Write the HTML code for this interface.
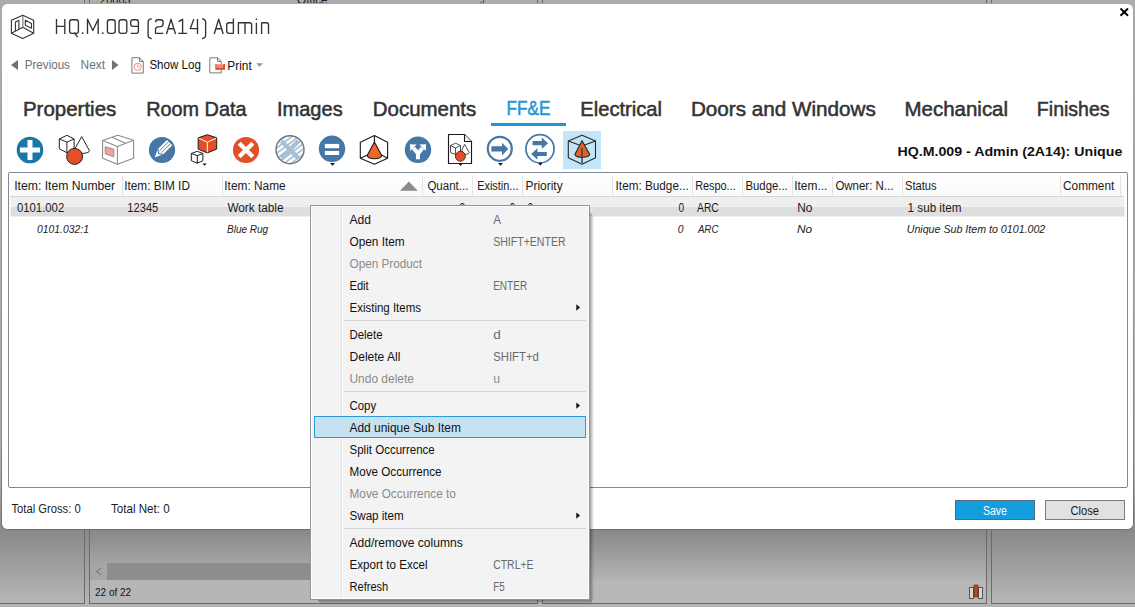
<!DOCTYPE html>
<html><head><meta charset="utf-8">
<style>
*{margin:0;padding:0}
html,body{width:1135px;height:607px;overflow:hidden;background:#a9a9a9}
svg{position:absolute;left:0;top:0;display:block}
text{font-family:"Liberation Sans",sans-serif;white-space:pre}
</style></head><body>
<svg width="1135" height="607" viewBox="0 0 1135 607">
<defs>
  <linearGradient id="bgEdge" x1="0" y1="0" x2="0" y2="1">
    <stop offset="0" stop-color="#acacac"/><stop offset="1" stop-color="#8c8c8c"/>
  </linearGradient>
  <linearGradient id="dlgStroke" x1="0" y1="0" x2="0" y2="1">
    <stop offset="0" stop-color="#a8a8a8"/><stop offset="0.8" stop-color="#8a8a8a"/><stop offset="1" stop-color="#707070"/>
  </linearGradient>
  <linearGradient id="bgL" x1="0" y1="0" x2="0" y2="1">
    <stop offset="0" stop-color="#888888"/><stop offset="1" stop-color="#b9b9b9"/>
  </linearGradient>
  <linearGradient id="bgR" x1="0" y1="0" x2="0" y2="1">
    <stop offset="0" stop-color="#878787"/><stop offset="1" stop-color="#b3b3b3"/>
  </linearGradient>
  <linearGradient id="hdr" x1="0" y1="0" x2="0" y2="1">
    <stop offset="0" stop-color="#ffffff"/><stop offset="1" stop-color="#f8f9fa"/>
  </linearGradient>
  <linearGradient id="row1" x1="0" y1="0" x2="0" y2="1">
    <stop offset="0" stop-color="#eeeeee"/><stop offset="1" stop-color="#dcdcdc"/>
  </linearGradient>
  <pattern id="hatch" patternUnits="userSpaceOnUse" width="4.2" height="4.2" patternTransform="rotate(-37)">
    <rect x="0" y="0" width="4.2" height="4.2" fill="#a6c0d8"/>
    <rect x="0" y="0" width="4.2" height="2.5" fill="#ffffff"/>
  </pattern>
</defs>
<!-- background app -->
<rect x="0" y="0" width="1135" height="607" fill="#acacac"/>
<rect x="0" y="470" width="1135" height="60" fill="url(#bgEdge)"/>
<rect x="0" y="529" width="1135" height="78" fill="url(#bgL)"/>
<rect x="90" y="529" width="447" height="51" fill="url(#bgR)"/>
<rect x="542" y="529" width="444" height="51" fill="url(#bgR)"/>
<rect x="90" y="580" width="447" height="23" fill="#b6b6b6"/>
<rect x="542" y="580" width="444" height="23" fill="#b8b8b8"/>
<rect x="90" y="563" width="447" height="17" fill="#a6a6a6"/>
<rect x="107" y="563" width="430" height="17" fill="#8d8d8d"/>
<path d="M101 568 L96.5 571.5 L101 575" stroke="#6a6a6a" stroke-width="1" fill="none"/>
<rect x="0" y="603" width="85" height="1" fill="#6a6a6a"/><rect x="89" y="603" width="449" height="1" fill="#6a6a6a"/><rect x="542" y="603" width="445" height="1" fill="#6a6a6a"/><rect x="991" y="603" width="144" height="1" fill="#6a6a6a"/>
<rect x="0" y="604" width="1135" height="3" fill="#b4b4b4"/>
<rect x="84" y="0" width="1" height="604" fill="#6a6a6a"/>
<rect x="89" y="0" width="1" height="604" fill="#6a6a6a"/>
<rect x="537" y="0" width="1" height="604" fill="#6a6a6a"/>
<rect x="542" y="0" width="1" height="604" fill="#6a6a6a"/>
<rect x="986" y="0" width="1" height="604" fill="#6a6a6a"/>
<rect x="991" y="0" width="1" height="604" fill="#6a6a6a"/>
<rect x="969.5" y="587.5" width="4" height="11" fill="#d6d6d6" stroke="#555" stroke-width="1"/>
<rect x="978.5" y="587.5" width="4" height="11" fill="#d6d6d6" stroke="#555" stroke-width="1"/>
<rect x="974" y="585" width="4" height="12" fill="#b9432a" stroke="#5a2a20" stroke-width="0.6"/>
<text x="95.00" y="596.00" font-size="11" textLength="36.11" lengthAdjust="spacingAndGlyphs" fill="#111" >22 of 22</text>
<text x="100.00" y="3.60" font-size="12" textLength="30.70" lengthAdjust="spacingAndGlyphs" fill="#222" >20003</text>
<text x="297.00" y="3.60" font-size="12" textLength="30.68" lengthAdjust="spacingAndGlyphs" fill="#222" >Office</text>
<text x="480.00" y="3.60" font-size="12" textLength="4.29" lengthAdjust="spacingAndGlyphs" fill="#222" >5</text>
<!-- dialog -->
<rect x="1.5" y="3.5" width="1132" height="526" rx="6" fill="#ffffff" stroke="url(#dlgStroke)" stroke-width="1"/>
<!-- logo -->
<g fill="none" stroke="#333" stroke-width="1.1" stroke-linejoin="round">
  <path d="M22.8 15.2 L11.4 20.2 L11.4 33.3 L22.8 38.4 L33.7 33.3 L33.7 20.2 Z"/>
  <path d="M11.4 33.3 L22.8 27.3 L33.7 33.3"/>
  <path d="M15.4 31 L15.4 22.1 L18.9 20.4 L18.9 29"/>
  <path d="M25.3 20.2 L31.5 23.4 L31.5 28.3 L25.3 25.3 Z"/>
</g>
<rect x="22" y="16" width="1.6" height="11.3" fill="#999"/>
<!-- title glyphs -->
<g fill="none" stroke="#333" stroke-width="1.35" stroke-linecap="butt" stroke-linejoin="round">
  <path d="M56.5 19 V34 M64.8 19 V34 M56.5 26.3 H64.8"/>
  <rect x="69.6" y="19.7" width="8.8" height="13.6" rx="2.3"/>
  <path d="M74.2 32.5 L77.6 37.2"/>
  <path d="M87.5 34 V19.2 L92.85 30.5 L98.2 19.2 V34"/>
  <rect x="107.4" y="19.7" width="7.8" height="13.6" rx="2.3"/>
  <rect x="119" y="19.7" width="7.8" height="13.6" rx="2.3"/>
  <path d="M138.4 26.4 H133 Q130.7 26.4 130.7 24.1 V22 Q130.7 19.7 133 19.7 H136.1 Q138.4 19.7 138.4 22 V31 Q138.4 33.3 136.1 33.3 H130.7"/>
  <path d="M151.8 18.9 Q148.1 19.2 148.1 22 V35.6 Q148.1 38.3 151.8 38.6"/>
  <path d="M155.5 22.2 Q155.5 19.7 158 19.7 H160.7 Q163.1 19.7 163.1 22.2 V24.1 Q163.1 26.4 160.7 26.6 L158 26.8 Q155.5 27 155.5 29.4 V33.3 H163.3"/>
  <path d="M166.5 34 L171 19.2 L175.5 34 M168.3 28.7 H173.7"/>
  <path d="M178.6 21.6 L182.6 19.3 V33.3 M178.3 33.3 H187.1"/>
  <path d="M197.5 19 V34 M193.8 19.3 L190.3 28.6 H198.4"/>
  <path d="M202 18.9 Q205.6 19.2 205.6 22 V35.6 Q205.6 38.3 202 38.6"/>
  <path d="M214.2 34 L218.7 19.2 L223.2 34 M216 28.7 H221.4"/>
  <path d="M233.4 18.6 V33.3 H229 Q226.7 33.3 226.7 31 V25 Q226.7 22.7 229 22.7 H233.4"/>
  <path d="M238.4 34 V22.7 H249.6 Q251.6 22.7 251.6 24.8 V34 M245 22.7 V34"/>
  <path d="M256.4 22.7 V34 M256.4 18.6 V20"/>
  <path d="M261.6 34 V22.7 H266.3 Q268.5 22.7 268.5 24.9 V34"/>
</g>
<rect x="81.8" y="32.4" width="1.6" height="1.6" fill="#333"/><rect x="101.9" y="32.4" width="1.6" height="1.6" fill="#333"/>
<!-- close X -->
<path d="M1120.5 8.5 L1128 15.8 M1128 8.5 L1120.5 15.8" stroke="#000" stroke-width="1.9"/>
<!-- nav arrows -->
<path d="M11 65 L18 60 L18 70 Z" fill="#707070"/>
<path d="M118.5 65 L112 60 L112 70 Z" fill="#707070"/>
<!-- show log icon -->
<path d="M131.9 57.7 L139.5 57.7 L143.3 61.5 L143.3 73.1 L131.9 73.1 Z" fill="#fff" stroke="#7a7a7a" stroke-width="1"/>
<path d="M139.5 57.7 L139.5 61.5 L143.3 61.5" fill="none" stroke="#7a7a7a" stroke-width="1"/>
<circle cx="137.7" cy="66.8" r="3.6" fill="none" stroke="#e8806a" stroke-width="0.9"/>
<path d="M137.7 64.6 L137.7 66.9 L139.6 66.9" fill="none" stroke="#e8806a" stroke-width="0.9"/>
<!-- print icon -->
<path d="M209.8 57.8 L217.5 57.8 L221.2 61.4 L221.2 72.9 L209.8 72.9 Z" fill="#fff" stroke="#7a7a7a" stroke-width="1"/>
<path d="M217.5 57.8 L217.5 61.4 L221.2 61.4" fill="none" stroke="#7a7a7a" stroke-width="1"/>
<rect x="215.3" y="64" width="9.7" height="5.8" fill="#e24a2a"/>
<text x="216.6" y="68.2" font-size="4.6" font-weight="bold" fill="#fbd0c4" textLength="7" lengthAdjust="spacingAndGlyphs">PDF</text>
<path d="M256.1 63.2 L263 63.2 L259.55 67.1 Z" fill="#9a9a9a"/>
<!-- tab underline -->
<rect x="491" y="123" width="75" height="3" fill="#1c97d6"/>
<!-- toolbar icons -->
<circle cx="30" cy="150" r="13.3" fill="#1a78a8"/>
<path d="M27.5 140 h5 v7.5 h7.5 v5 h-7.5 v7.5 h-5 v-7.5 h-7.5 v-5 h7.5 Z" fill="#fff"/>

<g fill="#fff" stroke="#222" stroke-width="1" stroke-linejoin="round">
  <path d="M66.9 135.3 L59.3 138.9 L59.3 148.8 L66.9 152.7 L74.1 148.8 L74.1 138.9 Z"/>
  <path d="M59.3 138.9 L66.9 142.2 L74.1 138.9 M66.9 142.2 L66.9 152.7" fill="none"/>
  <path d="M81.7 136.6 L75.4 147.8 Q76 153.4 82.7 153.4 Q89.8 153 89.3 150.4 Z"/>
  <circle cx="74.6" cy="156.4" r="8" fill="#e34f26"/>
</g>

<g fill="#fff" stroke="#8c8c8c" stroke-width="1.1" stroke-linejoin="round">
  <path d="M117.8 135.3 L102.6 140.5 L102.6 158.3 L117.4 164.3 L133.6 158.3 L133.6 140.2 Z"/>
  <path d="M102.6 140.5 L117.4 146.5 L133.6 140.2 M117.4 146.5 L117.4 164.3 M112.2 137.2 L126 143.5" fill="none"/>
  <path d="M105.2 146.8 L113.8 149.4 L113.8 156.7 L105.2 153.7 Z" fill="#f4a292" stroke="#999"/>
</g>

<circle cx="162" cy="150" r="13.1" fill="#4777a6"/>
<g transform="translate(162.4 149.8) rotate(45)">
  <path d="M-3.8 -10.2 h7.6 v12.8 l-3.8 8.4 l-3.8 -8.4 Z" fill="#fff"/>
  <path d="M-1.3 -10.2 v12.8 M1.3 -10.2 v12.8" stroke="#4777a6" stroke-width="0.9"/>
  <path d="M-4 2.6 L0 5.2 L4 2.6" stroke="#4777a6" stroke-width="1" fill="none"/>
</g>

<g stroke="#1a1a1a" stroke-width="1" stroke-linejoin="round">
  <path d="M207.3 134.7 L198.2 137.8 L198.2 149.1 L207.3 152.9 L216.7 149.1 L216.7 137.8 Z" fill="#e34f26"/>
  <path d="M198.8 138.3 L207.3 142.2 L216.1 138.3 M207.3 142.2 L207.3 152.3" stroke="#fff" fill="none"/>
  <path d="M197.3 151.3 L191.3 153.5 L191.3 160.7 L197.3 163.2 L202.9 160.7 L202.9 153.5 Z" fill="#fff"/>
  <path d="M191.3 153.5 L197.3 155.7 L202.9 153.5 M197.3 155.7 L197.3 163.2" fill="none"/>
</g>
<path d="M202.4 163.5 L206.7 163.5 L204.6 165.8 Z" fill="#111"/>

<circle cx="246" cy="150" r="13.1" fill="#e34f26"/>
<path d="M239.2 143.2 L252.8 156.8 M252.8 143.2 L239.2 156.8" stroke="#fff" stroke-width="4.3"/>

<circle cx="290" cy="149.7" r="14" fill="url(#hatch)" stroke="#747474" stroke-width="1.4"/>
<path d="M281.5 141 L298.5 158.4 M298.5 141 L281.5 158.4" stroke="#a6c0d8" stroke-width="4.6"/>

<circle cx="332" cy="148.8" r="13.2" fill="#4777a6"/>
<rect x="324.9" y="143.9" width="14.2" height="4.3" fill="#fff"/>
<rect x="324.9" y="151" width="14.2" height="4" fill="#fff"/>
<path d="M330 163.1 L335 163.1 L332.5 165.8 Z" fill="#111"/>

<g fill="none" stroke="#1a1a1a" stroke-width="1.1" stroke-linejoin="round">
  <path d="M374.4 135.6 L360.3 142.2 L360.3 158.3 L374.4 164.3 L387.6 158.3 L387.6 142.2 Z"/>
  <path d="M374.4 135.6 L374.4 142 M360.3 158.3 L367.5 155 M387.6 158.3 L381.5 155"/>
  <path d="M374.4 141.9 L367.2 155.4 Q368 158.7 374.4 158.7 Q381 158.7 381.7 155.4 Z" fill="#ee6628"/>
</g>

<circle cx="418" cy="149.8" r="13.2" fill="#4777a6"/>
<path d="M418 159.3 L418 153.5 L413.5 148 M418 153.5 L422.5 148" stroke="#fff" stroke-width="4" fill="none" stroke-linejoin="miter"/>
<path d="M409.9 144.2 L416.6 144.6 L410.3 150.9 Z" fill="#fff"/>
<path d="M426.1 144.2 L419.4 144.6 L425.7 150.9 Z" fill="#fff"/>
<path d="M448.5 134.5 L464.5 134.5 L471.5 141.5 L471.5 163.5 L448.5 163.5 Z" fill="#fff" stroke="#1a1a1a" stroke-width="1.15" stroke-linejoin="round"/>
<path d="M464.5 134.5 L464.5 141.5 L471.5 141.5" fill="#f0f0f0" stroke="#1a1a1a" stroke-width="1.1"/>
<g fill="#fff" stroke="#3a3a3a" stroke-width="0.9" stroke-linejoin="round">
  <path d="M455.5 143.2 L450.5 145.5 L450.5 152.5 L455.5 154.5 L460.5 152.5 L460.5 145.5 Z"/>
  <path d="M450.5 145.5 L455.5 148 L460.5 145.5 M455.5 148 L455.5 154.5" fill="none"/>
  <path d="M464.7 144.4 L461.8 150 Q462.5 154.4 465 154.4 Q469.6 154 469.4 152.9 Z"/>
</g>
<circle cx="460.4" cy="156.3" r="5" fill="#e34f26" stroke="#222" stroke-width="0.8"/>
<path d="M458.7 163.8 L462.5 163.8 L460.6 166 Z" fill="#111"/>

<circle cx="499.8" cy="148.8" r="12" fill="none" stroke="#4777a6" stroke-width="2.2"/>
<path d="M491.4 146.3 L502 146.3 L502 142.8 L508.3 149 L502 155.4 L502 151.6 L491.4 151.6 Z" fill="#4777a6"/>
<path d="M498 162.9 L503 162.9 L500.5 165.7 Z" fill="#111"/>

<circle cx="540" cy="148.8" r="14.1" fill="none" stroke="#4777a6" stroke-width="1.7"/>
<path d="M532.6 141 L541.8 141 L541.8 137.5 L548 143.2 L541.8 148.9 L541.8 145.2 L532.6 145.2 Z" fill="#4777a6"/>
<path d="M546.8 151.9 L537.4 151.9 L537.4 148.3 L531.2 154 L537.4 159.7 L537.4 156.1 L546.8 156.1 Z" fill="#4777a6"/>
<path d="M538.3 162.9 L542.4 162.9 L540.3 165.8 Z" fill="#111"/>

<rect x="563" y="131" width="38" height="38" fill="#c3e5f9"/>
<g fill="none" stroke="#2a2a2a" stroke-width="1.1" stroke-linejoin="round">
  <path d="M582 135.2 L568.3 141 L568.3 157.7 L582 164.2 L595.5 157.7 L595.5 141 Z"/>
  <path d="M568.3 141 L582 146.1 L595.5 141"/>
</g>
<rect x="581" y="157" width="2" height="7" fill="#5a6a78"/>
<path d="M582 140.7 L574.9 154.4 Q575.5 157.3 582 157.3 Q589 157.3 589.7 154.4 Z" fill="#e0622a" stroke="#2a2a2a" stroke-width="1.1"/>
<rect x="581" y="148" width="2" height="9" fill="#7a4030"/>

<!-- grid -->
<rect x="8.5" y="172.5" width="1119" height="315" fill="#fff" stroke="#7f8a96" stroke-width="1" rx="1.5"/>
<rect x="10" y="174" width="1114" height="22" fill="url(#hdr)"/>
<rect x="10" y="196" width="1114" height="1" fill="#d6d6d6"/>
<g fill="#e3e3e3">
  <rect x="122" y="175" width="1" height="21"/><rect x="222" y="175" width="1" height="21"/>
  <rect x="422" y="175" width="1" height="21"/><rect x="472" y="175" width="1" height="21"/>
  <rect x="522" y="175" width="1" height="21"/><rect x="612" y="175" width="1" height="21"/>
  <rect x="692" y="175" width="1" height="21"/><rect x="742" y="175" width="1" height="21"/>
  <rect x="792" y="175" width="1" height="21"/><rect x="832" y="175" width="1" height="21"/>
  <rect x="902" y="175" width="1" height="21"/><rect x="1060" y="175" width="1" height="21"/>
  <rect x="1120" y="175" width="1" height="21"/>
</g>
<path d="M400 190.7 L417.7 190.7 L408.85 181.6 Z" fill="#8a8a8a"/>
<rect x="10.5" y="197" width="1114" height="10" fill="#efefef"/><rect x="10.5" y="207" width="1114" height="9.5" fill="#dedede"/>

<!-- buttons -->
<rect x="955.5" y="500.5" width="79" height="19" fill="#139ee0" stroke="#5a6a78" stroke-width="1"/>
<rect x="1045.5" y="500.5" width="79" height="19" fill="#e1e1e1" stroke="#7a7a7a" stroke-width="1"/>

<text x="24.77" y="69.10" font-size="12.5" textLength="45.16" lengthAdjust="spacingAndGlyphs" fill="#707070" >Previous</text>
<text x="80.55" y="69.10" font-size="12.5" textLength="24.45" lengthAdjust="spacingAndGlyphs" fill="#707070" >Next</text>
<text x="149.40" y="69.20" font-size="12.5" textLength="51.56" lengthAdjust="spacingAndGlyphs" fill="#111" >Show Log</text>
<text x="227.35" y="69.60" font-size="12.5" textLength="24.35" lengthAdjust="spacingAndGlyphs" fill="#111" >Print</text>
<text x="22.94" y="116.00" font-size="19.3" textLength="93.34" lengthAdjust="spacingAndGlyphs" fill="#333" stroke="#333" stroke-width="0.5">Properties</text>
<text x="146.17" y="116.00" font-size="19.3" textLength="100.34" lengthAdjust="spacingAndGlyphs" fill="#333" stroke="#333" stroke-width="0.5">Room Data</text>
<text x="276.96" y="116.00" font-size="19.3" textLength="65.70" lengthAdjust="spacingAndGlyphs" fill="#333" stroke="#333" stroke-width="0.5">Images</text>
<text x="372.84" y="116.00" font-size="19.3" textLength="103.44" lengthAdjust="spacingAndGlyphs" fill="#333" stroke="#333" stroke-width="0.5">Documents</text>
<text x="580.36" y="116.00" font-size="19.3" textLength="81.58" lengthAdjust="spacingAndGlyphs" fill="#333" stroke="#333" stroke-width="0.5">Electrical</text>
<text x="690.93" y="116.00" font-size="19.3" textLength="184.96" lengthAdjust="spacingAndGlyphs" fill="#333" stroke="#333" stroke-width="0.5">Doors and Windows</text>
<text x="904.54" y="116.00" font-size="19.3" textLength="103.52" lengthAdjust="spacingAndGlyphs" fill="#333" stroke="#333" stroke-width="0.5">Mechanical</text>
<text x="1036.89" y="116.00" font-size="19.3" textLength="72.66" lengthAdjust="spacingAndGlyphs" fill="#333" stroke="#333" stroke-width="0.5">Finishes</text>
<text x="506.51" y="114.70" font-size="19.3" textLength="43.97" lengthAdjust="spacingAndGlyphs" fill="#1c97d6" stroke="#1c97d6" stroke-width="0.5">FF&amp;E</text>
<text x="897.50" y="155.90" font-size="13.7" textLength="224.80" lengthAdjust="spacingAndGlyphs" fill="#111" font-weight="bold" >HQ.M.009 - Admin (2A14): Unique</text>
<text x="14.18" y="189.80" font-size="12" textLength="101.01" lengthAdjust="spacingAndGlyphs" fill="#1a1a1a" >Item: Item Number</text>
<text x="124.21" y="189.80" font-size="12" textLength="65.76" lengthAdjust="spacingAndGlyphs" fill="#1a1a1a" >Item: BIM ID</text>
<text x="224.31" y="189.80" font-size="12" textLength="61.37" lengthAdjust="spacingAndGlyphs" fill="#1a1a1a" >Item: Name</text>
<text x="427.40" y="189.80" font-size="12" textLength="41.02" lengthAdjust="spacingAndGlyphs" fill="#1a1a1a" >Quant...</text>
<text x="477.20" y="189.80" font-size="12" textLength="41.30" lengthAdjust="spacingAndGlyphs" fill="#1a1a1a" >Existin...</text>
<text x="525.60" y="189.80" font-size="12" textLength="37.00" lengthAdjust="spacingAndGlyphs" fill="#1a1a1a" >Priority</text>
<text x="615.62" y="189.80" font-size="12" textLength="73.11" lengthAdjust="spacingAndGlyphs" fill="#1a1a1a" >Item: Budge...</text>
<text x="695.20" y="189.80" font-size="12" textLength="40.50" lengthAdjust="spacingAndGlyphs" fill="#1a1a1a" >Respo...</text>
<text x="745.50" y="189.80" font-size="12" textLength="42.22" lengthAdjust="spacingAndGlyphs" fill="#1a1a1a" >Budge...</text>
<text x="794.21" y="189.80" font-size="12" textLength="33.13" lengthAdjust="spacingAndGlyphs" fill="#1a1a1a" >Item...</text>
<text x="835.40" y="189.80" font-size="12" textLength="58.02" lengthAdjust="spacingAndGlyphs" fill="#1a1a1a" >Owner: N...</text>
<text x="905.00" y="189.80" font-size="12" textLength="31.60" lengthAdjust="spacingAndGlyphs" fill="#1a1a1a" >Status</text>
<text x="1063.00" y="189.80" font-size="12" textLength="51.34" lengthAdjust="spacingAndGlyphs" fill="#1a1a1a" >Comment</text>
<text x="17.00" y="211.80" font-size="12" textLength="47.19" lengthAdjust="spacingAndGlyphs" fill="#1a1a1a" >0101.002</text>
<text x="127.30" y="211.80" font-size="12" textLength="31.00" lengthAdjust="spacingAndGlyphs" fill="#1a1a1a" >12345</text>
<text x="227.40" y="211.80" font-size="12" textLength="56.08" lengthAdjust="spacingAndGlyphs" fill="#1a1a1a" >Work table</text>
<text x="678.50" y="211.80" font-size="12" textLength="5.63" lengthAdjust="spacingAndGlyphs" fill="#1a1a1a" >0</text>
<text x="697.00" y="211.80" font-size="12" textLength="21.81" lengthAdjust="spacingAndGlyphs" fill="#1a1a1a" >ARC</text>
<text x="797.30" y="211.80" font-size="12" textLength="15.18" lengthAdjust="spacingAndGlyphs" fill="#1a1a1a" >No</text>
<text x="907.60" y="211.80" font-size="12" textLength="53.80" lengthAdjust="spacingAndGlyphs" fill="#1a1a1a" >1 sub item</text>
<text x="459.00" y="211.80" font-size="12" textLength="6.20" lengthAdjust="spacingAndGlyphs" fill="#1a1a1a" >6</text>
<text x="509.50" y="211.80" font-size="12" textLength="5.72" lengthAdjust="spacingAndGlyphs" fill="#1a1a1a" >0</text>
<text x="527.50" y="211.80" font-size="12" textLength="5.72" lengthAdjust="spacingAndGlyphs" fill="#1a1a1a" >0</text>
<text x="37.00" y="232.70" font-size="11" textLength="51.91" lengthAdjust="spacingAndGlyphs" fill="#222" font-style="italic" >0101.032:1</text>
<text x="227.00" y="232.70" font-size="11" textLength="41.20" lengthAdjust="spacingAndGlyphs" fill="#222" font-style="italic" >Blue Rug</text>
<text x="677.80" y="232.70" font-size="11" textLength="5.77" lengthAdjust="spacingAndGlyphs" fill="#222" font-style="italic" >0</text>
<text x="697.89" y="232.70" font-size="11" textLength="20.56" lengthAdjust="spacingAndGlyphs" fill="#222" font-style="italic" >ARC</text>
<text x="797.00" y="232.70" font-size="11" textLength="15.13" lengthAdjust="spacingAndGlyphs" fill="#222" font-style="italic" >No</text>
<text x="906.70" y="232.70" font-size="11" textLength="138.61" lengthAdjust="spacingAndGlyphs" fill="#222" font-style="italic" >Unique Sub Item to 0101.002</text>
<text x="11.50" y="513.00" font-size="12" textLength="69.20" lengthAdjust="spacingAndGlyphs" fill="#1a1a1a" >Total Gross: 0</text>
<text x="111.00" y="513.00" font-size="12" textLength="58.68" lengthAdjust="spacingAndGlyphs" fill="#1a1a1a" >Total Net: 0</text>
<text x="983.00" y="514.90" font-size="12.5" textLength="23.96" lengthAdjust="spacingAndGlyphs" fill="#fff" >Save</text>
<text x="1070.60" y="514.90" font-size="12.5" textLength="28.36" lengthAdjust="spacingAndGlyphs" fill="#1a1a1a" >Close</text>
<!-- context menu -->
<g fill="#000">
  <rect x="590" y="213" width="1" height="389" fill-opacity="0.30"/>
  <rect x="591" y="214" width="1" height="388" fill-opacity="0.22"/>
  <rect x="592" y="215" width="1" height="386" fill-opacity="0.12"/>
  <rect x="593" y="216" width="1" height="384" fill-opacity="0.05"/>
  <rect x="318" y="600" width="272" height="1" fill-opacity="0.30"/>
  <rect x="319" y="601" width="272" height="1" fill-opacity="0.22"/>
  <rect x="320" y="602" width="272" height="1" fill-opacity="0.12"/>
  <rect x="321" y="603" width="272" height="1" fill-opacity="0.05"/>
</g>
<rect x="310.5" y="205.5" width="279" height="394" fill="#f3f3f3" stroke="#959595" stroke-width="1"/>
<rect x="311.5" y="206.5" width="277" height="392" fill="none" stroke="#ffffff" stroke-width="1"/>
<rect x="341" y="207" width="1" height="390" fill="#e2e2e2"/>
<rect x="342" y="207" width="1" height="390" fill="#fff"/>
<rect x="344" y="320" width="242" height="1" fill="#d5d5d5"/>
<rect x="344" y="391" width="242" height="1" fill="#d5d5d5"/>
<rect x="344" y="528" width="242" height="1" fill="#d5d5d5"/>
<rect x="314.5" y="416.5" width="271" height="21" fill="#c6e2f2" stroke="#2a9ad8" stroke-width="1"/>
<path d="M576.3 304.3 L580 307.5 L576.3 310.7 Z" fill="#111"/>
<path d="M576.3 402.4 L580 405.6 L576.3 408.8 Z" fill="#111"/>
<path d="M576.3 512.4 L580 515.6 L576.3 518.8 Z" fill="#111"/>

<text x="349.50" y="223.70" font-size="12" textLength="21.48" lengthAdjust="spacingAndGlyphs" fill="#111" >Add</text>
<text x="493.20" y="223.70" font-size="12" textLength="7.80" lengthAdjust="spacingAndGlyphs" fill="#6a6a6a" >A</text>
<text x="349.50" y="245.80" font-size="12" textLength="55.20" lengthAdjust="spacingAndGlyphs" fill="#111" >Open Item</text>
<text x="493.20" y="245.80" font-size="12" textLength="72.41" lengthAdjust="spacingAndGlyphs" fill="#6a6a6a" >SHIFT+ENTER</text>
<text x="349.50" y="267.80" font-size="12" textLength="72.45" lengthAdjust="spacingAndGlyphs" fill="#8a8a8a" >Open Product</text>
<text x="349.50" y="289.80" font-size="12" textLength="19.18" lengthAdjust="spacingAndGlyphs" fill="#111" >Edit</text>
<text x="493.20" y="289.80" font-size="12" textLength="33.92" lengthAdjust="spacingAndGlyphs" fill="#6a6a6a" >ENTER</text>
<text x="349.50" y="311.70" font-size="12" textLength="71.50" lengthAdjust="spacingAndGlyphs" fill="#111" >Existing Items</text>
<text x="349.50" y="338.90" font-size="12" textLength="32.99" lengthAdjust="spacingAndGlyphs" fill="#111" >Delete</text>
<text x="493.20" y="338.90" font-size="12" textLength="7.56" lengthAdjust="spacingAndGlyphs" fill="#6a6a6a" >d</text>
<text x="349.50" y="360.90" font-size="12" textLength="50.86" lengthAdjust="spacingAndGlyphs" fill="#111" >Delete All</text>
<text x="493.20" y="360.90" font-size="12" textLength="45.64" lengthAdjust="spacingAndGlyphs" fill="#6a6a6a" >SHIFT+d</text>
<text x="349.50" y="382.60" font-size="12" textLength="64.38" lengthAdjust="spacingAndGlyphs" fill="#8a8a8a" >Undo delete</text>
<text x="493.20" y="382.60" font-size="12" textLength="6.79" lengthAdjust="spacingAndGlyphs" fill="#8a8a8a" >u</text>
<text x="349.50" y="409.70" font-size="12" textLength="26.70" lengthAdjust="spacingAndGlyphs" fill="#111" >Copy</text>
<text x="349.50" y="431.70" font-size="12" textLength="111.40" lengthAdjust="spacingAndGlyphs" fill="#111" >Add unique Sub Item</text>
<text x="349.50" y="453.90" font-size="12" textLength="85.29" lengthAdjust="spacingAndGlyphs" fill="#111" >Split Occurrence</text>
<text x="349.50" y="475.90" font-size="12" textLength="92.08" lengthAdjust="spacingAndGlyphs" fill="#111" >Move Occurrence</text>
<text x="349.50" y="498.00" font-size="12" textLength="106.38" lengthAdjust="spacingAndGlyphs" fill="#8a8a8a" >Move Occurrence to</text>
<text x="349.50" y="519.70" font-size="12" textLength="54.20" lengthAdjust="spacingAndGlyphs" fill="#111" >Swap item</text>
<text x="349.50" y="547.00" font-size="12" textLength="113.20" lengthAdjust="spacingAndGlyphs" fill="#111" >Add/remove columns</text>
<text x="349.50" y="569.00" font-size="12" textLength="78.04" lengthAdjust="spacingAndGlyphs" fill="#111" >Export to Excel</text>
<text x="493.20" y="569.00" font-size="12" textLength="40.30" lengthAdjust="spacingAndGlyphs" fill="#6a6a6a" >CTRL+E</text>
<text x="349.50" y="590.70" font-size="12" textLength="38.72" lengthAdjust="spacingAndGlyphs" fill="#111" >Refresh</text>
<text x="493.20" y="590.70" font-size="12" textLength="11.43" lengthAdjust="spacingAndGlyphs" fill="#6a6a6a" >F5</text>
</svg>
</body></html>
